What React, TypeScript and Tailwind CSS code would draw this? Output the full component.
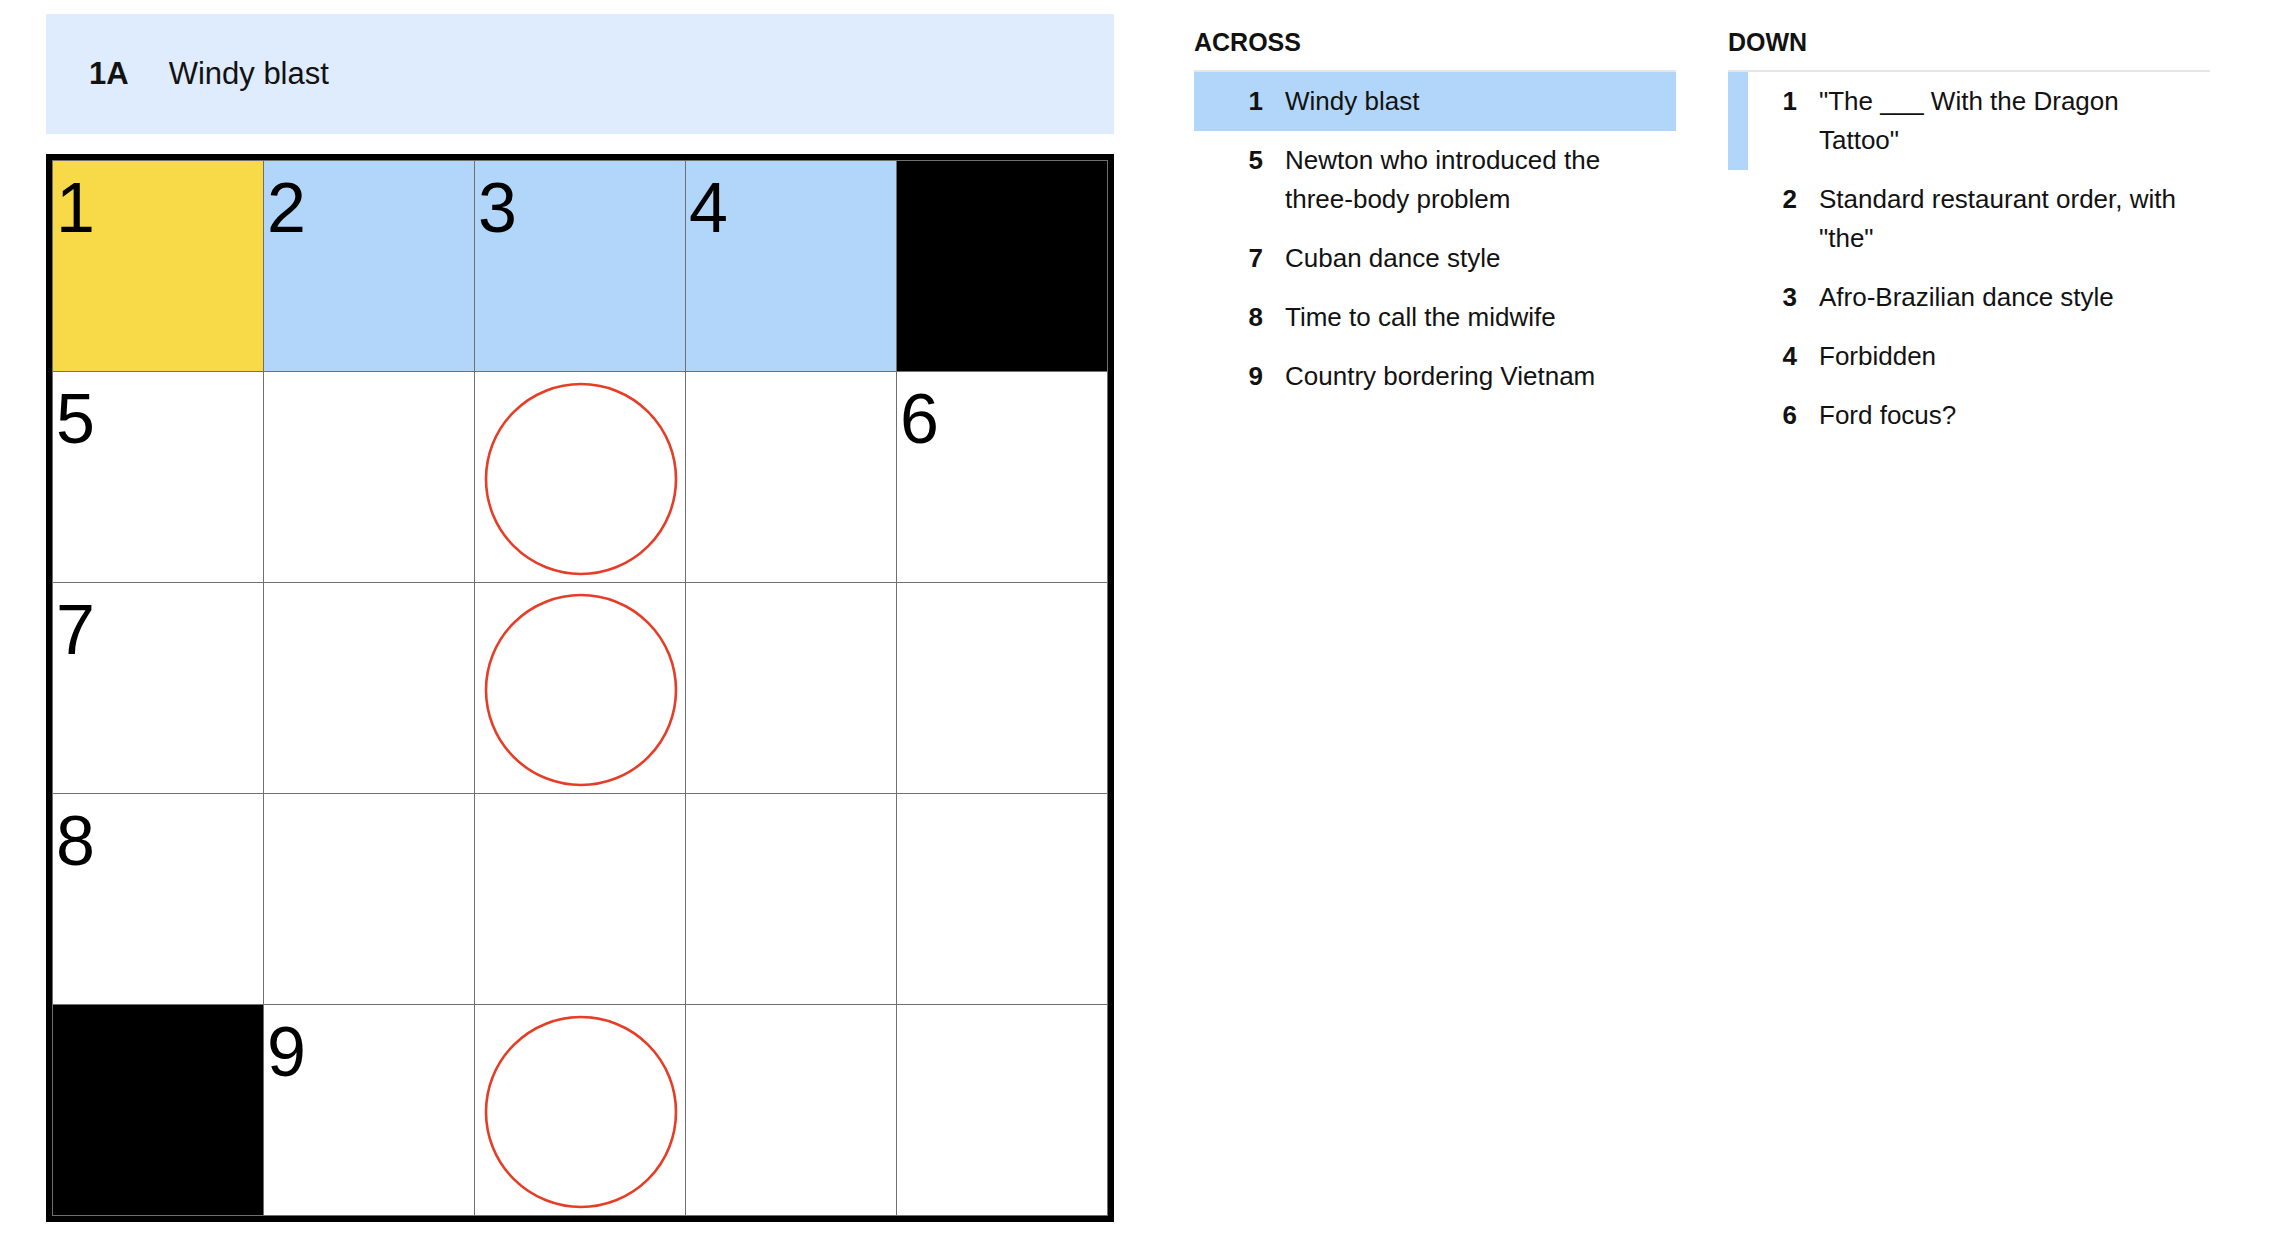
const font = { fontFamily: '"Liberation Sans", Arial, sans-serif' };

type Cell = { n?: number; black?: boolean; circle?: boolean; tone?: "yellow" | "blue" };

const grid: Cell[][] = [
  [{ n: 1, tone: "yellow" }, { n: 2, tone: "blue" }, { n: 3, tone: "blue" }, { n: 4, tone: "blue" }, { black: true }],
  [{ n: 5 }, {}, { circle: true }, {}, { n: 6 }],
  [{ n: 7 }, {}, { circle: true }, {}, {}],
  [{ n: 8 }, {}, {}, {}, {}],
  [{ black: true }, { n: 9 }, { circle: true }, {}, {}],
];

const across = [
  { n: 1, text: "Windy blast", active: true },
  { n: 5, text: "Newton who introduced the three-body problem" },
  { n: 7, text: "Cuban dance style" },
  { n: 8, text: "Time to call the midwife" },
  { n: 9, text: "Country bordering Vietnam" },
];

const down = [
  { n: 1, text: '"The ___ With the Dragon Tattoo"', related: true },
  { n: 2, text: 'Standard restaurant order, with "the"' },
  { n: 3, text: "Afro-Brazilian dance style" },
  { n: 4, text: "Forbidden" },
  { n: 6, text: "Ford focus?" },
];

function Square({ cell }: { cell: Cell }) {
  let bg = "bg-white";
  if (cell.black) bg = "bg-black";
  else if (cell.tone === "yellow") bg = "bg-[#f8d948]";
  else if (cell.tone === "blue") bg = "bg-[#b1d6f9]";

  return (
    <div className={`relative h-[210px] w-[210px] ${bg}`}>
      {cell.n !== undefined && (
        <span className="absolute left-[3px] top-[12px] text-[70px] leading-[70px] text-black">
          {cell.n}
        </span>
      )}
      {cell.circle && (
        <svg className="absolute left-[9px] top-[10px]" width="194" height="194" viewBox="0 0 194 194">
          <circle cx="97" cy="97" r="95" fill="none" stroke="#e63d26" strokeWidth="2.6" />
        </svg>
      )}
    </div>
  );
}

function ClueList({
  title,
  clues,
}: {
  title: string;
  clues: { n: number; text: string; active?: boolean; related?: boolean }[];
}) {
  return (
    <div className="w-[482px]">
      <div className="border-b-2 border-[#e6e6e6] pb-[13px] pt-[13px] text-[25px] font-bold leading-[30px] text-[#121212]">
        {title}
      </div>
      <ul>
        {clues.map((c) => (
          <li
            key={c.n}
            className={`flex border-l-[20px] py-[10px] text-[26px] leading-[39px] text-[#121212] ${
              c.active
                ? "border-[#b1d6f9] bg-[#b1d6f9]"
                : c.related
                ? "border-[#b1d6f9]"
                : "border-transparent"
            }`}
          >
            <span className="w-[49px] shrink-0 text-right font-bold">{c.n}</span>
            <span className="ml-[22px] flex-1 pr-[12px]">{c.text}</span>
          </li>
        ))}
      </ul>
    </div>
  );
}

export default function App() {
  return (
    <div className="flex h-[1246px] w-[2292px] bg-white pl-[46px] pt-[14px]" style={font}>
      <div className="w-[1068px] shrink-0">
        <div className="flex h-[120px] items-center bg-[#dfecfd] pl-[43px] text-[31px] text-[#121212]">
          <span className="font-bold">1A</span>
          <span className="ml-[40px]">Windy blast</span>
        </div>
        <div className="mt-[20px] border-[6px] border-black">
          <div className="grid grid-cols-[repeat(5,210px)] gap-px bg-[#707070] p-px">
            {grid.flat().map((cell, i) => (
              <Square key={i} cell={cell} />
            ))}
          </div>
        </div>
      </div>
      <div className="ml-[80px] flex gap-[52px]">
        <ClueList title="ACROSS" clues={across} />
        <ClueList title="DOWN" clues={down} />
      </div>
    </div>
  );
}
